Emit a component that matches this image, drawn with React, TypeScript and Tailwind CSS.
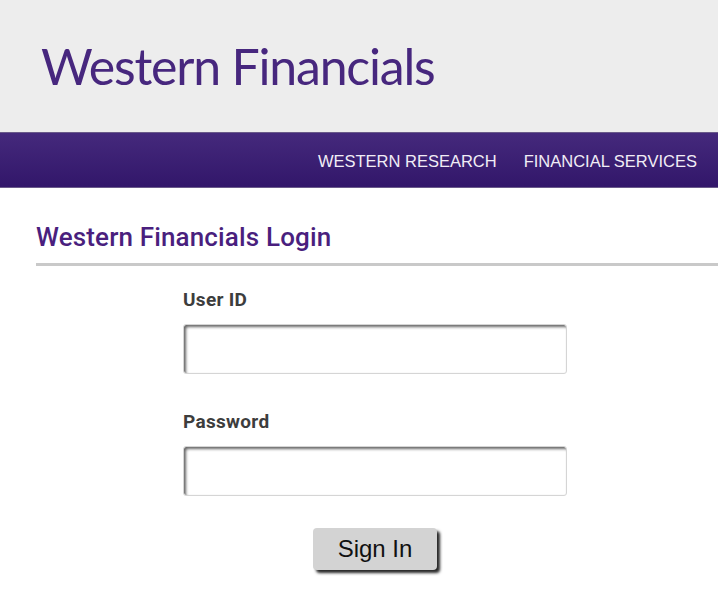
import React from "react";

export default function App() {
  return (
    <div className="min-h-[600px] w-full bg-white">
      <header className="h-[132px] bg-[#ededed] pl-[41px] pt-[36px]">
        <h1
          className="text-[50px] leading-[60px] text-[#47277e] tracking-[-1.2px]"
          style={{ fontFamily: "Lato, 'Open Sans', sans-serif" }}
        >
          Western Financials
        </h1>
      </header>
      <nav className="h-[56px] border-y border-[#6a5a8a] bg-gradient-to-b from-[#45297c] to-[#32166a] flex items-center justify-end pr-[21px] pt-[3px] gap-[27px] text-[16.5px] text-[#f1edf6] font-['Liberation_Sans',Arial,sans-serif]">
        <span>WESTERN RESEARCH</span>
        <span>FINANCIAL SERVICES</span>
      </nav>
      <main className="pl-[36px] pt-[34px]">
        <h2 className="text-[26px] leading-[30px] font-medium text-[#4a1f7e] font-['Roboto',sans-serif] tracking-[0.15px] pb-[11px] border-b-[3px] border-[#c9c9c9]">
          Western Financials Login
        </h2>
        <form className="ml-[147px] w-[384px] flex flex-col font-['Roboto',sans-serif]">
          <label className="mt-[22px] text-[19px] leading-[24px] font-bold text-[#3d3d3d] tracking-[0.3px]">User ID</label>
          <input
            type="text"
            className="mt-[12px] h-[50px] w-full rounded-[3px] bg-white border border-[#d5d5d5] shadow-[inset_2px_2px_3px_rgba(0,0,0,0.6)] outline-none"
          />
          <label className="mt-[36px] text-[19px] leading-[24px] font-bold text-[#3d3d3d] tracking-[0.3px]">Password</label>
          <input
            type="password"
            className="mt-[12px] h-[50px] w-full rounded-[3px] bg-white border border-[#d5d5d5] shadow-[inset_2px_2px_3px_rgba(0,0,0,0.6)] outline-none"
          />
          <div className="flex justify-center mt-[32px]">
            <button
              type="button"
              className="w-[124px] h-[42px] rounded-[4px] bg-[#d3d3d3] text-[24px] text-[#111] font-['Liberation_Sans',Arial,sans-serif] shadow-[3px_3px_3px_rgba(0,0,0,0.85)]"
            >
              Sign In
            </button>
          </div>
        </form>
      </main>
    </div>
  );
}
